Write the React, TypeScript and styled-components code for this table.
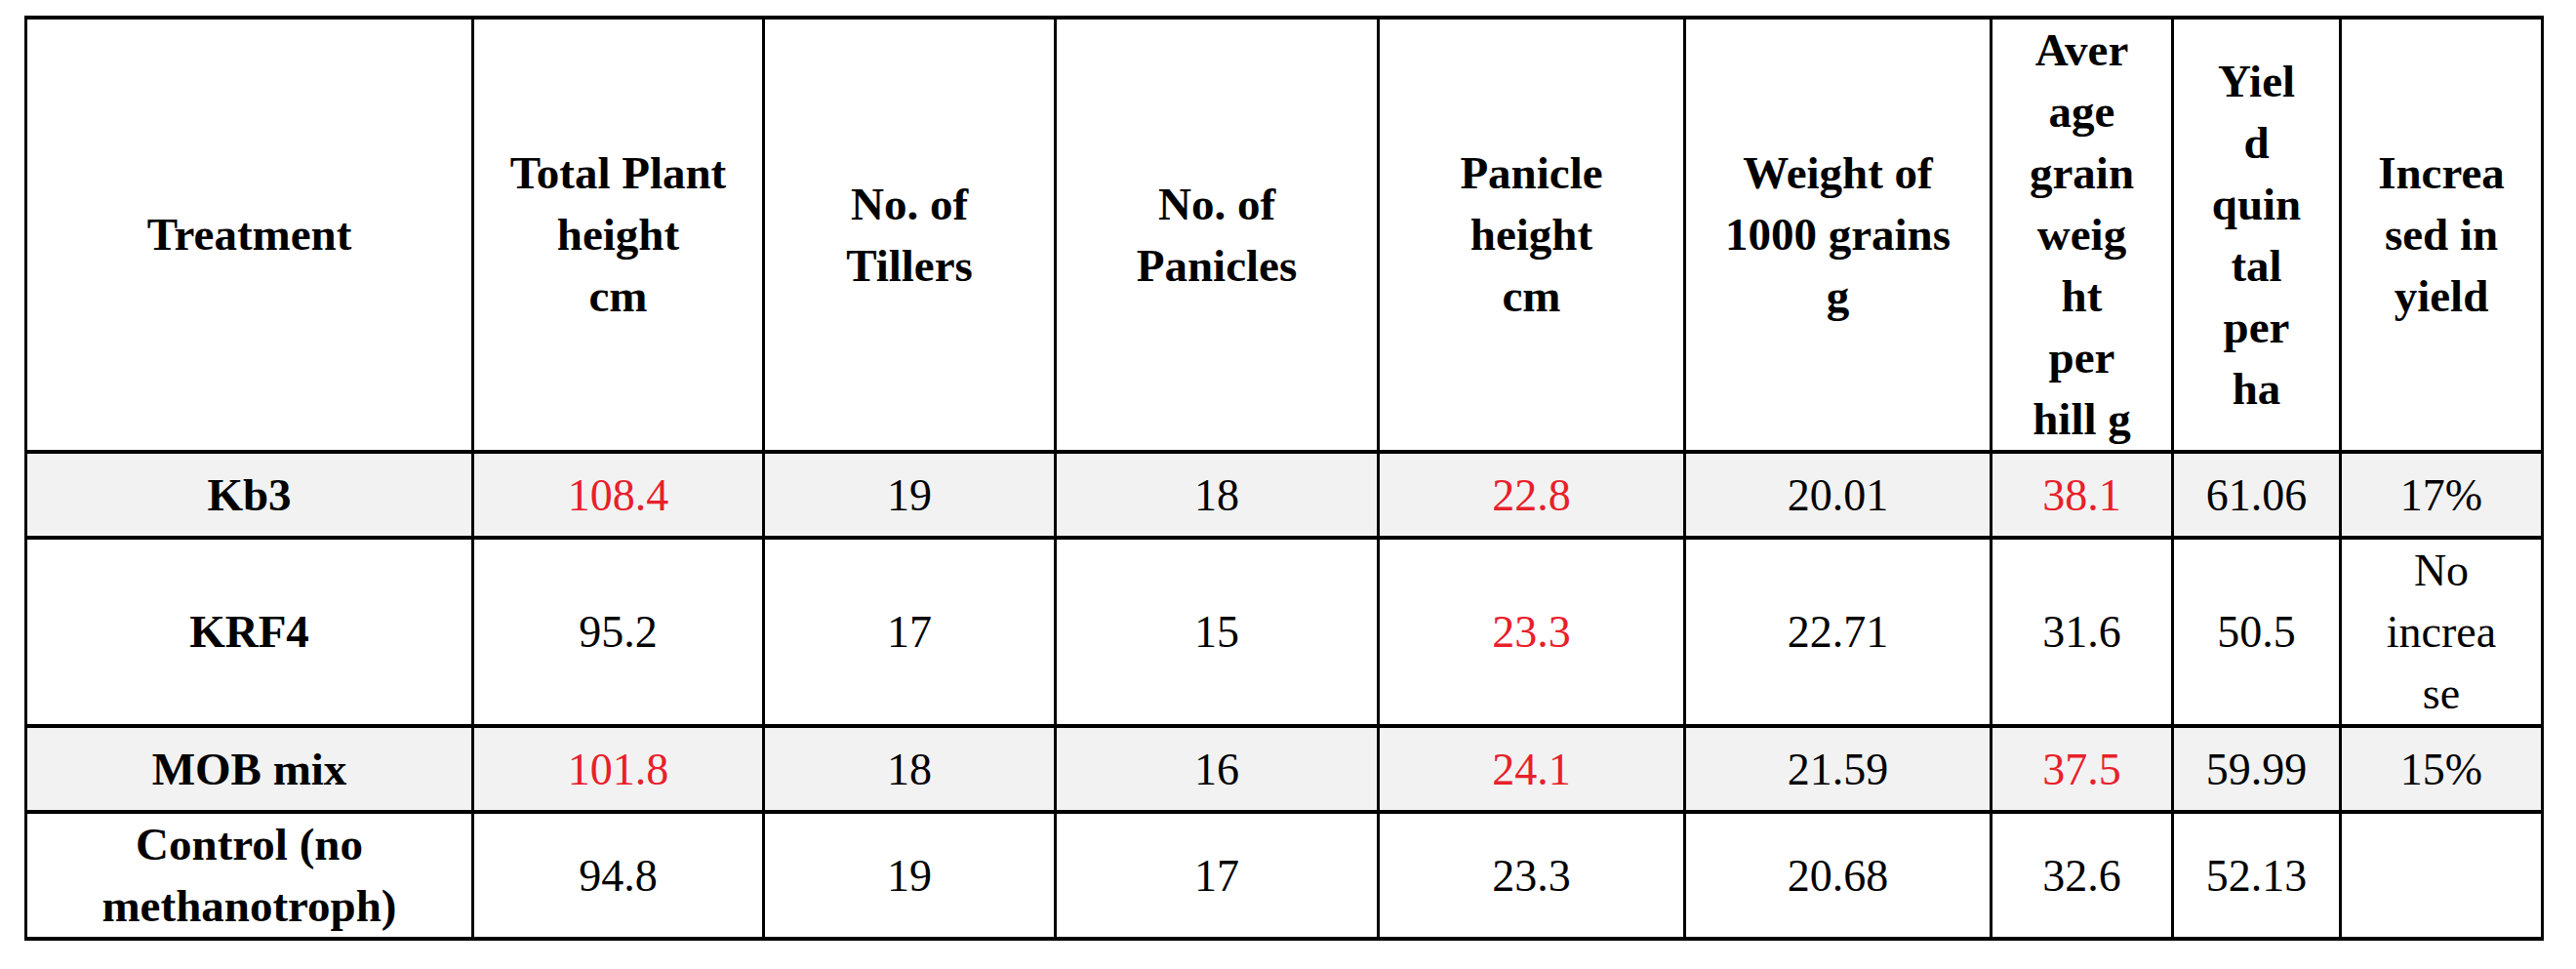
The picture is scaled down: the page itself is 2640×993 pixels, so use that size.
import React from "react";
import styled, { createGlobalStyle } from "styled-components";

type CellProps = {
  $red?: boolean;
  $bold?: boolean;
};

type RowProps = {
  $shade?: boolean;
  $h: number;
};

const GlobalStyle = createGlobalStyle`
  html, body {
    margin: 0;
    padding: 0;
    background: #ffffff;
  }
`;

const Page = styled.div`
  padding: 16px 0 0 25px;
  background: #ffffff;
  min-height: 993px;
  box-sizing: border-box;
`;

const Table = styled.table`
  border-collapse: collapse;
  table-layout: fixed;
  width: 2582px;
  font-family: "Liberation Serif", "Times New Roman", serif;
  color: #000000;
`;

const Row = styled.tr<RowProps>`
  height: ${({ $h }) => $h}px;
  background-color: ${({ $shade }) => ($shade ? "#f2f2f2" : "#ffffff")};
`;

const HeadCell = styled.th`
  border-top: 4px solid #000;
  border-bottom: 4px solid #000;
  border-left: 3px solid #000;
  border-right: 3px solid #000;
  padding: 0;
  font-size: 47px;
  font-weight: 700;
  line-height: 63px;
  text-align: center;
  vertical-align: middle;
  white-space: nowrap;
`;

const Cell = styled.td<CellProps>`
  border-top: 4px solid #000;
  border-bottom: 4px solid #000;
  border-left: 3px solid #000;
  border-right: 3px solid #000;
  padding: 0;
  font-size: ${({ $bold }) => ($bold ? "47px" : "46px")};
  font-weight: ${({ $bold }) => ($bold ? 700 : 400)};
  line-height: 63px;
  text-align: center;
  vertical-align: middle;
  white-space: nowrap;
  color: ${({ $red }) => ($red ? "#e8202a" : "#000000")};
`;

const widths = [458, 298, 299, 331, 314, 314, 186, 172, 207];

const headers = [
  ["Treatment"],
  ["Total Plant", "height", "cm"],
  ["No. of", "Tillers"],
  ["No. of", "Panicles"],
  ["Panicle", "height", "cm"],
  ["Weight of", "1000 grains", "g"],
  ["Aver", "age", "grain", "weig", "ht", "per", "hill g"],
  ["Yiel", "d", "quin", "tal", "per", "ha"],
  ["Increa", "sed in", "yield"],
];

type Value = { text: string[]; red?: boolean };

type DataRow = {
  name: string[];
  shade: boolean;
  height: number;
  values: Value[];
};

const rows: DataRow[] = [
  {
    name: ["Kb3"],
    shade: true,
    height: 88,
    values: [
      { text: ["108.4"], red: true },
      { text: ["19"] },
      { text: ["18"] },
      { text: ["22.8"], red: true },
      { text: ["20.01"] },
      { text: ["38.1"], red: true },
      { text: ["61.06"] },
      { text: ["17%"] },
    ],
  },
  {
    name: ["KRF4"],
    shade: false,
    height: 191,
    values: [
      { text: ["95.2"] },
      { text: ["17"] },
      { text: ["15"] },
      { text: ["23.3"], red: true },
      { text: ["22.71"] },
      { text: ["31.6"] },
      { text: ["50.5"] },
      { text: ["No", "increa", "se"] },
    ],
  },
  {
    name: ["MOB mix"],
    shade: true,
    height: 88,
    values: [
      { text: ["101.8"], red: true },
      { text: ["18"] },
      { text: ["16"] },
      { text: ["24.1"], red: true },
      { text: ["21.59"] },
      { text: ["37.5"], red: true },
      { text: ["59.99"] },
      { text: ["15%"] },
    ],
  },
  {
    name: ["Control (no", "methanotroph)"],
    shade: false,
    height: 126,
    values: [
      { text: ["94.8"] },
      { text: ["19"] },
      { text: ["17"] },
      { text: ["23.3"] },
      { text: ["20.68"] },
      { text: ["32.6"] },
      { text: ["52.13"] },
      { text: [""] },
    ],
  },
];

// renders lines separated by manual breaks, as in the source document
const Lines = ({ lines }: { lines: string[] }) => (
  <>
    {lines.map((line, i) => (
      <React.Fragment key={i}>
        {i > 0 && <br />}
        {line}
      </React.Fragment>
    ))}
  </>
);

const App = () => {
  return (
    <Page>
      <GlobalStyle />
      <Table>
        <colgroup>
          {widths.map((w, i) => (
            <col key={i} style={{ width: w }} />
          ))}
        </colgroup>
        <thead>
          <Row $h={445}>
            {headers.map((h, i) => (
              <HeadCell key={i}>
                <Lines lines={h} />
              </HeadCell>
            ))}
          </Row>
        </thead>
        <tbody>
          {rows.map((row, i) => (
            <Row key={i} $shade={row.shade} $h={row.height}>
              <Cell $bold>
                <Lines lines={row.name} />
              </Cell>
              {row.values.map((v, j) => (
                <Cell key={j} $red={v.red}>
                  <Lines lines={v.text} />
                </Cell>
              ))}
            </Row>
          ))}
        </tbody>
      </Table>
    </Page>
  );
};

export default App;
